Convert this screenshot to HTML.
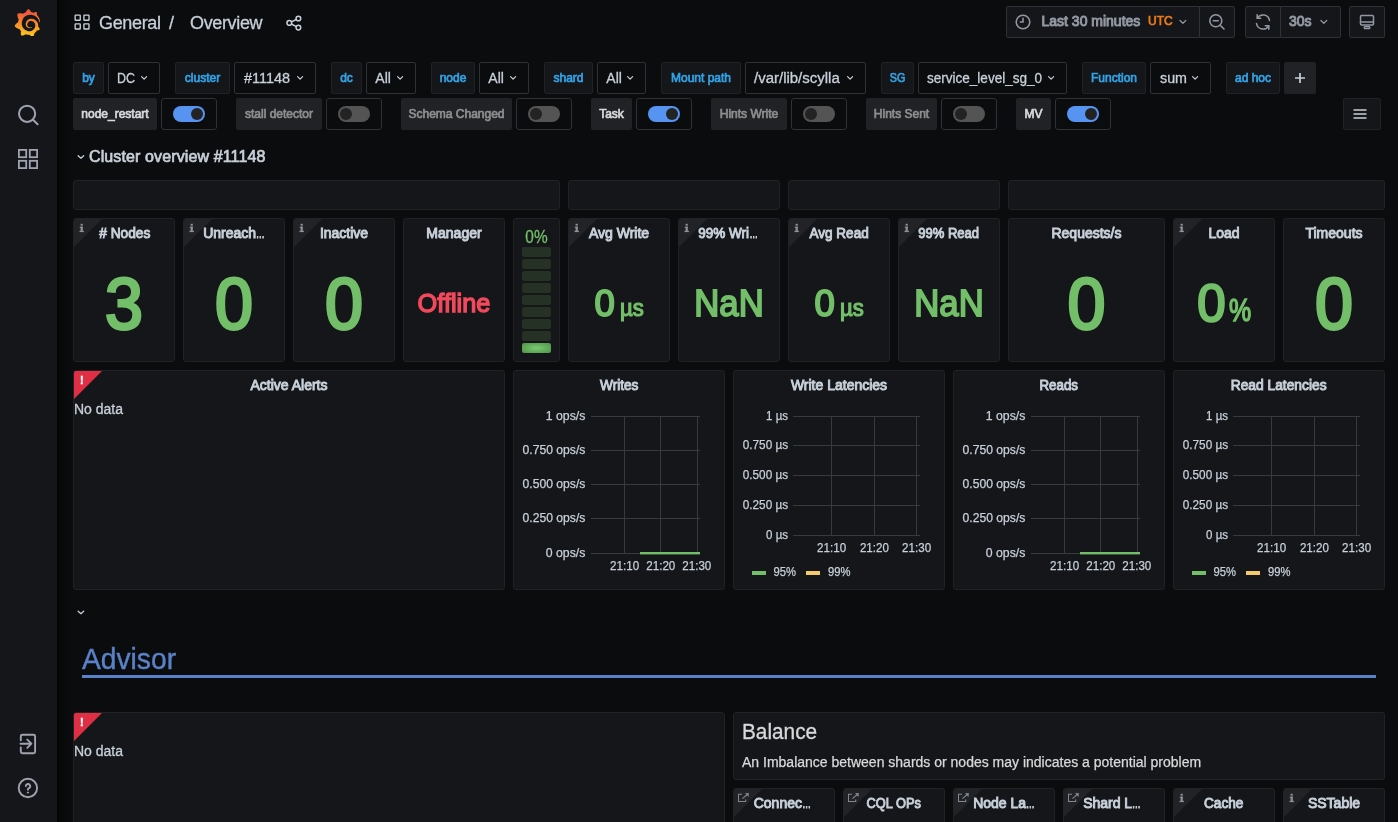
<!DOCTYPE html><html><head><meta charset="utf-8"><title>Overview - Grafana</title><style>
*{box-sizing:border-box;margin:0;padding:0}
html,body{width:1398px;height:822px;overflow:hidden;background:#0b0c0e;}
body{font-family:"Liberation Sans",sans-serif;color:#c7d0d9;position:relative;font-size:14px}
.abs{position:absolute}
.g text{stroke:#c7d0d9;stroke-width:0.25px}
.m{font-weight:normal;-webkit-text-stroke:0.95px}
#side{left:0;top:0;width:57px;height:822px;background:#141619;}
.panel{position:absolute;background:#141619;border:1px solid #202226;border-radius:3px;overflow:hidden}
.ptitle{position:absolute;left:0;right:0;top:6px;text-align:center;font-weight:normal;-webkit-text-stroke:0.95px;font-size:14px;color:#c7d0d9;white-space:nowrap;line-height:16px}
.val{position:absolute;left:0;right:0;text-align:center;font-weight:bold;white-space:nowrap}
.corner{position:absolute;left:0;top:0;width:0;height:0;border-top:28px solid #212327;border-right:28px solid transparent}
.corner.red{border-top-color:#e02f44}
.ci{position:absolute;left:6px;top:3px;font-size:10px;font-weight:bold;color:#8e8e8e;font-family:"Liberation Serif",serif;line-height:12px}
.vlabel{position:absolute;height:32px;background:#141619;border:1px solid #202226;border-radius:2px;color:#33a2e5;font-size:12px;font-weight:normal;-webkit-text-stroke:0.7px;line-height:30px;text-align:center;white-space:nowrap}
.vval{position:absolute;height:32px;background:#0b0c0e;border:1px solid #2c3235;border-radius:2px;color:#c7d0d9;font-size:14px;-webkit-text-stroke:0.3px;line-height:30px;padding-left:8px;white-space:nowrap}
.alabel{position:absolute;height:32px;background:#202226;border-radius:2px;font-size:12px;font-weight:normal;-webkit-text-stroke:0.7px;line-height:32px;text-align:center;white-space:nowrap}
.tbox{position:absolute;height:32px;width:56px;background:#0b0c0e;border:1px solid #2c3235;border-radius:3px}
.tog{position:absolute;left:11px;top:7px;width:32px;height:16px;border-radius:8px;background:#545454}
.tog i{position:absolute;top:2px;left:2px;width:12px;height:12px;border-radius:6px;background:#232324}
.tog.on{background:#5794f2}
.tog.on i{left:18px}
.tbtn{position:absolute;top:6px;height:32px;background:#141619;border:1px solid #2c3235;color:#9fa7b3;font-size:14px;line-height:30px;white-space:nowrap}
</style></head><body><div id="root" style="position:absolute;left:0;top:0;width:1398px;height:822px;will-change:transform">
<div id="side" class="abs"></div>
<div class="abs" style="left:57px;top:0;width:16px;height:822px;background:linear-gradient(90deg,#020202,#070809 20%,#0b0c0e)"></div>
<svg class="abs" style="left:14.05px;top:8.5px" width="26.68" height="27.74" viewBox="0 0 351 365"><defs><linearGradient id="lg" gradientUnits="userSpaceOnUse" x1="175" y1="365" x2="175" y2="50"><stop offset="0" stop-color="#fccb1a"/><stop offset="1" stop-color="#f2583a"/></linearGradient></defs><path fill="url(#lg)" d="M342,161.2c-0.6-6.1-1.6-13.100-3.600-20.900c-2-7.700-5-16.200-9.400-25c-4.400-8.800-10.100-17.900-17.500-26.800c-2.900-3.500-6.100-6.900-9.500-10.200c5.100-20.300-6.200-37.900-6.200-37.900c-19.500-1.200-31.900,6.100-36.500,9.400c-0.800-0.300-1.500-0.700-2.300-1c-3.300-1.300-6.700-2.600-10.300-3.700c-3.500-1.100-7.100-2.100-10.800-3c-3.700-0.900-7.400-1.600-11.200-2.200c-0.700-0.100-1.300-0.200-2-0.300c-8.500-27.200-32.900-38.600-32.900-38.600c-27.300,17.300-32.400,41.500-32.400,41.500s-0.100,0.500-0.300,1.400c-1.500,0.400-3,0.900-4.500,1.300c-2.100,0.600-4.200,1.400-6.200,2.200c-2.100,0.800-4.100,1.600-6.200,2.500c-4.100,1.800-8.200,3.800-12.200,6c-3.900,2.200-7.700,4.600-11.400,7.100c-0.500-0.200-1-0.400-1-0.400c-37.800-14.400-71.300,2.900-71.300,2.900c-3.100,40.200,15.100,65.500,18.700,70.100c-0.900,2.500-1.700,5-2.500,7.500c-2.800,9.100-4.900,18.400-6.200,28.100c-0.200,1.400-0.400,2.800-0.500,4.200C18.800,192.700,8.500,228,8.500,228c29.100,33.500,63.100,35.600,63.100,35.600c0,0,0.100-0.100,0.100-0.100c4.300,7.700,9.300,15,14.900,21.900c2.400,2.900,4.800,5.600,7.400,8.300c-10.600,30.400,1.500,55.600,1.500,55.600c32.400,1.200,53.700-14.200,58.200-17.700c3.200,1.100,6.500,2.100,9.800,2.900c10,2.600,20.200,4.100,30.400,4.500c2.500,0.100,5.100,0.200,7.600,0.100l1.200,0l0.800,0l1.600,0l1.600-0.100l0,0.100c15.300,21.800,42.100,24.900,42.100,24.900c19.100-20.100,20.200-40.100,20.200-44.400l0,0c0,0,0-0.100,0-0.300c0-0.400,0-0.600,0-0.600l0,0c0-0.300,0-0.600,0-0.900c4-2.800,7.800-5.800,11.400-9.100c7.600-6.900,14.300-14.800,19.900-23.300c0.500-0.800,1-1.600,1.500-2.400c21.600,1.200,36.900-13.400,36.900-13.400c-3.600-22.500-16.400-33.500-19.100-35.600l0,0c0,0-0.100-0.100-0.300-0.200c-0.200-0.100-0.200-0.200-0.200-0.200c0,0,0,0,0,0c-0.100-0.100-0.300-0.200-0.500-0.300c0.100-1.400,0.200-2.700,0.300-4.100c0.200-2.400,0.200-4.900,0.200-7.300l0-1.800l0-0.900l0-0.500c0-0.600,0-0.400,0-0.600l-0.100-1.500l-0.100-2c0-0.700-0.100-1.300-0.200-1.900c-0.100-0.600-0.100-1.300-0.200-1.900l-0.200-1.900l-0.300-1.900c-0.400-2.500-0.800-4.900-1.400-7.400c-2.300-9.700-6.100-18.900-11-27.200c-5-8.300-11.200-15.600-18.300-21.800c-7-6.200-14.900-11.200-23.100-14.900c-8.300-3.700-16.900-6.100-25.500-7.200c-4.300-0.600-8.600-0.800-12.900-0.700l-1.600,0l-0.400,0c-0.100,0-0.600,0-0.500,0l-0.700,0l-1.600,0.100c-0.600,0-1.200,0.100-1.700,0.100c-2.200,0.200-4.400,0.500-6.500,0.900c-8.600,1.600-16.700,4.700-23.800,9c-7.100,4.300-13.300,9.600-18.300,15.600c-5,6-8.900,12.700-11.600,19.600c-2.700,6.900-4.200,14.100-4.600,21c-0.100,1.700-0.100,3.500-0.100,5.200c0,0.400,0,0.900,0,1.300l0.100,1.400c0.100,0.800,0.100,1.700,0.200,2.500c0.300,3.500,1,6.900,1.900,10.100c1.900,6.500,4.900,12.400,8.600,17.400c3.700,5,8.200,9.100,12.900,12.400c4.700,3.200,9.800,5.500,14.800,7c5,1.500,10,2.100,14.700,2.100c0.600,0,1.200,0,1.700,0c0.300,0,0.600,0,0.900,0c0.300,0,0.600,0,0.900-0.100c0.500,0,1-0.100,1.500-0.100c0.100,0,0.300,0,0.400-0.100l0.500-0.100c0.300,0,0.600-0.100,0.900-0.100c0.600-0.100,1.100-0.200,1.700-0.300c0.600-0.100,1.100-0.200,1.600-0.400c1.100-0.200,2.100-0.600,3.100-0.900c2-0.700,4-1.500,5.700-2.400c1.800-0.900,3.400-2,5-3c0.400-0.300,0.900-0.600,1.300-1c1.600-1.300,1.900-3.700,0.600-5.300c-1.100-1.400-3.100-1.800-4.700-0.900c-0.400,0.200-0.800,0.400-1.200,0.600c-1.400,0.700-2.800,1.300-4.300,1.800c-1.500,0.500-3.100,0.900-4.700,1.200c-0.800,0.100-1.600,0.200-2.500,0.300c-0.400,0-0.800,0.100-1.300,0.100c-0.400,0-0.900,0-1.200,0c-0.400,0-0.800,0-1.200,0c-0.500,0-1,0-1.500-0.100c0,0-0.300,0-0.100,0l-0.200,0l-0.300,0c-0.200,0-0.500,0-0.700-0.100c-0.500-0.100-0.900-0.100-1.400-0.200c-3.700-0.500-7.400-1.600-10.900-3.200c-3.600-1.600-7-3.800-10.100-6.600c-3.100-2.800-5.800-6.100-7.900-9.900c-2.100-3.800-3.600-8-4.300-12.400c-0.300-2.200-0.500-4.500-0.400-6.700c0-0.600,0.100-1.200,0.100-1.800c0,0.200,0-0.100,0-0.100l0-0.200l0-0.500c0-0.300,0.100-0.600,0.100-0.900c0.100-1.200,0.300-2.400,0.500-3.600c1.700-9.600,6.500-19,13.900-26.100c1.900-1.800,3.900-3.400,6-4.900c2.100-1.500,4.400-2.800,6.800-3.900c2.400-1.100,4.800-2,7.400-2.700c2.500-0.700,5.100-1.100,7.800-1.400c1.300-0.100,2.600-0.200,4-0.200c0.400,0,0.600,0,0.900,0l1.100,0l0.700,0c0.300,0,0,0,0.100,0l0.300,0l1.100,0.100c2.900,0.200,5.700,0.600,8.500,1.300c5.600,1.200,11.100,3.300,16.200,6.100c10.200,5.700,18.900,14.500,24.200,25.100c2.700,5.300,4.600,11,5.500,16.900c0.200,1.500,0.400,3,0.500,4.500l0.100,1.100l0.100,1.100c0,0.400,0,0.800,0,1.100c0,0.400,0,0.800,0,1.100l0,1l0,1.100c0,0.700-0.100,1.900-0.100,2.600c-0.100,1.600-0.300,3.300-0.500,4.900c-0.200,1.600-0.500,3.200-0.800,4.800c-0.300,1.600-0.700,3.200-1.100,4.700c-0.800,3.100-1.800,6.200-3,9.300c-2.400,6-5.600,11.800-9.400,17.100c-7.700,10.600-18.200,19.200-30.200,24.700c-6,2.700-12.300,4.700-18.800,5.700c-3.200,0.600-6.500,0.900-9.800,1l-0.600,0l-0.500,0l-1.100,0l-1.600,0l-0.800,0c0.400,0-0.100,0-0.100,0l-0.300,0c-1.800,0-3.500-0.100-5.300-0.300c-7-0.500-13.900-1.800-20.700-3.700c-6.700-1.900-13.200-4.600-19.400-7.800c-12.300-6.600-23.400-15.600-32-26.500c-4.300-5.400-8.100-11.300-11.200-17.400c-3.100-6.100-5.600-12.600-7.400-19.100c-1.800-6.600-2.900-13.300-3.400-20.100l-0.100-1.300l0-0.300l0-0.300l0-0.600l0-1.100l0-0.300l0-0.400l0-0.800l0-1.600l0-0.300c0,0,0,0.100,0-0.100l0-0.600c0-0.800,0-1.700,0-2.500c0.100-3.300,0.400-6.800,0.800-10.200c0.400-3.400,1-6.900,1.700-10.300c0.700-3.400,1.500-6.800,2.500-10.200c1.900-6.700,4.300-13.200,7.100-19.300c5.700-12.200,13.100-23.100,22-31.800c2.200-2.200,4.500-4.200,6.900-6.200c2.400-1.900,4.900-3.700,7.500-5.400c2.500-1.700,5.200-3.200,7.900-4.600c1.300-0.700,2.700-1.400,4.100-2c0.700-0.300,1.400-0.600,2.100-0.900c0.700-0.300,1.400-0.600,2.100-0.900c2.800-1.200,5.700-2.200,8.700-3.100c0.700-0.200,1.500-0.400,2.200-0.700c0.700-0.200,1.500-0.400,2.200-0.600c1.500-0.400,3-0.800,4.500-1.100c0.700-0.200,1.500-0.300,2.300-0.500c0.800-0.200,1.500-0.300,2.300-0.500c0.800-0.100,1.500-0.300,2.300-0.400l1.100-0.200l1.200-0.200c0.800-0.100,1.500-0.200,2.300-0.300c0.900-0.100,1.700-0.200,2.600-0.300c0.700-0.100,1.900-0.200,2.600-0.300c0.500-0.100,1.100-0.100,1.600-0.200l1.100-0.100l0.500-0.100l0.600,0c0.900-0.100,1.700-0.100,2.600-0.200l1.300-0.100c0,0,0.500,0,0.100,0l0.300,0l0.600,0c0.700,0,1.500-0.100,2.200-0.100c2.900-0.100,5.900-0.100,8.800,0c5.800,0.200,11.500,0.900,17,1.900c11.100,2.100,21.500,5.600,31,10.300c9.500,4.600,17.900,10.300,25.300,16.500c0.500,0.400,0.900,0.800,1.400,1.200c0.400,0.400,0.900,0.800,1.300,1.200c0.900,0.800,1.700,1.600,2.600,2.400c0.900,0.800,1.700,1.600,2.500,2.400c0.800,0.800,1.600,1.600,2.400,2.500c3.100,3.300,6,6.600,8.600,10c5.200,6.700,9.400,13.500,12.700,19.900c0.200,0.400,0.400,0.800,0.600,1.200c0.200,0.400,0.400,0.800,0.600,1.200c0.400,0.800,0.800,1.600,1.100,2.400c0.400,0.800,0.700,1.500,1.100,2.300c0.300,0.800,0.700,1.500,1,2.300c1.200,3,2.400,5.900,3.300,8.600c1.500,4.400,2.600,8.300,3.500,11.700c0.300,1.400,1.600,2.300,3,2.100c1.500-0.100,2.600-1.300,2.600-2.800C342.600,170.400,342.500,166.100,342,161.200z"/></svg>
<svg class="abs" style="left:16px;top:102px" width="26" height="26" viewBox="0 0 26 26" fill="none" stroke="#9fa3b0" stroke-width="2" stroke-linecap="round"><circle cx="11.1" cy="11.8" r="8.1"/><path d="M17 17.7 L21.6 22.3"/></svg>
<svg class="abs" style="left:17px;top:148px" width="22" height="22" viewBox="0 0 22 22" fill="none" stroke="#9fa3b0" stroke-width="1.8"><rect x="1.9" y="1.9" width="7.3" height="7.3"/><rect x="12.8" y="1.9" width="7.3" height="7.3"/><rect x="1.9" y="12.8" width="7.3" height="7.3"/><rect x="12.8" y="12.8" width="7.3" height="7.3"/></svg>
<svg class="abs" style="left:16px;top:731px" width="24" height="26" viewBox="0 0 24 26" fill="none" stroke="#9fa3b0" stroke-width="1.9" stroke-linecap="round" stroke-linejoin="round"><path d="M4.800 9.200 V5.300 a1.500 1.500 0 0 1 1.500 -1.500 H17.600 a1.500 1.500 0 0 1 1.500 1.500 V20.700 a1.500 1.500 0 0 1 -1.500 1.500 H6.300 a1.500 1.500 0 0 1 -1.500 -1.500 V16.500"/><path d="M4.500 12.700 H15 M11.300 8.600 L15.400 12.700 L11.300 16.800"/></svg>
<svg class="abs" style="left:16px;top:776px" width="24" height="24" viewBox="0 0 24 24" fill="none" stroke="#9fa3b0" stroke-width="1.9" stroke-linecap="round"><circle cx="11.900" cy="12" r="9.200"/><path d="M9.800 10.100 a2.200 2.200 0 1 1 3.200 2 c-0.700 0.400 -1.100 0.800 -1.100 1.600" stroke-width="1.900"/><circle cx="11.900" cy="16.600" r="0.700" fill="#9fa3b0" stroke-width="0.8"/></svg>
<svg class="abs" style="left:73.8px;top:13.700px" width="17" height="17" viewBox="0 0 17 17" fill="none" stroke="#c7d0d9" stroke-width="1.35"><rect x="1.150" y="1.150" width="5.100" height="5.100" rx="0.500"/><rect x="9.900" y="1.150" width="5.100" height="5.100" rx="0.500"/><rect x="1.150" y="9.900" width="5.100" height="5.100" rx="0.500"/><rect x="9.900" y="9.900" width="5.100" height="5.100" rx="0.500"/></svg>
<div class="abs" id="crumb1" style="left:99px;top:12px;font-size:18px;letter-spacing:-0.35px;-webkit-text-stroke:0.3px;line-height:22px;color:#c7d0d9;white-space:nowrap">General</div>
<div class="abs" id="crumb2" style="left:169px;top:12px;font-size:18px;letter-spacing:-0.35px;-webkit-text-stroke:0.3px;line-height:22px;color:#c7d0d9;white-space:nowrap">/</div>
<div class="abs" id="crumb3" style="left:190px;top:12px;font-size:18px;letter-spacing:-0.35px;-webkit-text-stroke:0.3px;line-height:22px;color:#c7d0d9;white-space:nowrap">Overview</div>
<svg class="abs" style="left:285px;top:14px" width="18" height="18" viewBox="0 0 18 18" fill="none" stroke="#c7d0d9" stroke-width="1.5"><circle cx="13.400" cy="4.500" r="2.350"/><circle cx="4.300" cy="8.950" r="2.350"/><circle cx="13.400" cy="13.600" r="2.350"/><path d="M6.400 7.900 L11.300 5.500 M6.400 10 L11.300 12.550"/></svg>
<div class="tbtn" style="left:1006px;width:194px;border-radius:2px 0 0 2px"></div>
<div class="tbtn" style="left:1199px;width:36px;border-radius:0 2px 2px 0"></div>
<div class="tbtn" style="left:1245px;width:36px;border-radius:2px 0 0 2px"></div>
<div class="tbtn" style="left:1280px;width:61px;border-radius:0 2px 2px 0"></div>
<div class="tbtn" style="left:1349px;width:36px;border-radius:2px"></div>
<svg class="abs" style="left:1015px;top:14px" width="16" height="16" viewBox="0 0 16 16" fill="none" stroke="#9298a2" stroke-width="1.55" stroke-linecap="round"><circle cx="8" cy="8" r="6.800"/><path d="M8 4.300 V8 H5.300"/></svg>
<div class="abs" id="tp" style="left:1041.5px;top:12px;font-size:14px;-webkit-text-stroke:0.95px;line-height:18px;color:#9298a2;white-space:nowrap">Last 30 minutes</div>
<div class="abs" id="utc" style="left:1148px;top:13px;font-size:12px;-webkit-text-stroke:0.7px;line-height:16px;color:#eb7b18;white-space:nowrap">UTC</div>
<svg class="abs" style="left:1178px;top:18px" width="11" height="8" fill="none" stroke="#9298a2" stroke-width="1.2" stroke-linecap="round" stroke-linejoin="round"><path d="M2.00 2.50 L4.90 5.30 L7.80 2.50"/></svg>
<svg class="abs" style="left:1208px;top:13px" width="18" height="18" viewBox="0 0 18 18" fill="none" stroke="#9298a2" stroke-width="1.55" stroke-linecap="round"><circle cx="7.800" cy="7.800" r="6"/><path d="M12.200 12.200 L16 16 M5.300 7.800 H10.300"/></svg>
<svg class="abs" style="left:1254px;top:13px" width="18" height="18" viewBox="0 0 18 18" fill="none" stroke="#9298a2" stroke-width="1.55" stroke-linecap="round" stroke-linejoin="round"><path d="M15.500 7.500 A6.600 6.600 0 0 0 3.300 5.200 M2.500 10.500 A6.600 6.600 0 0 0 14.700 12.800"/><path d="M3.200 1.800 V5.300 H6.700 M14.800 16.200 V12.700 H11.300"/></svg>
<div class="abs" id="r30" style="left:1289px;top:12px;font-size:14px;-webkit-text-stroke:0.95px;line-height:18px;color:#9298a2;white-space:nowrap">30s</div>
<svg class="abs" style="left:1319px;top:18px" width="11" height="8" fill="none" stroke="#9298a2" stroke-width="1.2" stroke-linecap="round" stroke-linejoin="round"><path d="M1.90 2.50 L4.80 5.30 L7.70 2.50"/></svg>
<svg class="abs" style="left:1358px;top:13px" width="18" height="18" viewBox="0 0 18 18" fill="none" stroke="#9298a2" stroke-width="1.5" stroke-linecap="round" stroke-linejoin="round"><rect x="2.500" y="2.600" width="13" height="9.400" rx="1.2"/><path d="M2.500 9 H15.500"/><rect x="6.200" y="13.700" width="5.600" height="1.800" rx="0.6" stroke-width="1.3"/></svg>
<div class="vlabel" style="left:73px;top:62px;width:31px">by</div>
<div class="vval" id="vv0" style="left:108px;top:62px;width:52px"><span style="display:inline-block;transform-origin:0 50%;transform:scaleX(0.89);margin-left:0px">DC</span></div>
<svg class="abs" style="left:140px;top:75px" width="10" height="7" fill="none" stroke="#c7d0d9" stroke-width="1.2" stroke-linecap="round" stroke-linejoin="round"><path d="M1.60 1.60 L4.10 4.20 L6.60 1.60"/></svg>
<div class="vlabel" style="left:175px;top:62px;width:55px">cluster</div>
<div class="vval" id="vv1" style="left:234px;top:62px;width:82px"><span style="display:inline-block;transform-origin:0 50%;transform:scaleX(1.03);margin-left:0.8px">#11148</span></div>
<svg class="abs" style="left:296px;top:75px" width="10" height="7" fill="none" stroke="#c7d0d9" stroke-width="1.2" stroke-linecap="round" stroke-linejoin="round"><path d="M1.60 1.60 L4.10 4.20 L6.60 1.60"/></svg>
<div class="vlabel" style="left:331px;top:62px;width:31px">dc</div>
<div class="vval" id="vv2" style="left:366px;top:62px;width:50px"><span style="display:inline-block;transform-origin:0 50%;transform:scaleX(1.0);margin-left:0.3px">All</span></div>
<svg class="abs" style="left:396px;top:75px" width="10" height="7" fill="none" stroke="#c7d0d9" stroke-width="1.2" stroke-linecap="round" stroke-linejoin="round"><path d="M1.60 1.60 L4.10 4.20 L6.60 1.60"/></svg>
<div class="vlabel" style="left:431px;top:62px;width:44px">node</div>
<div class="vval" id="vv3" style="left:479px;top:62px;width:50px"><span style="display:inline-block;transform-origin:0 50%;transform:scaleX(1.0);margin-left:0.3px">All</span></div>
<svg class="abs" style="left:509px;top:75px" width="10" height="7" fill="none" stroke="#c7d0d9" stroke-width="1.2" stroke-linecap="round" stroke-linejoin="round"><path d="M1.60 1.60 L4.10 4.20 L6.60 1.60"/></svg>
<div class="vlabel" style="left:544px;top:62px;width:49px">shard</div>
<div class="vval" id="vv4" style="left:597px;top:62px;width:49px"><span style="display:inline-block;transform-origin:0 50%;transform:scaleX(1.0);margin-left:0.3px">All</span></div>
<svg class="abs" style="left:626px;top:75px" width="10" height="7" fill="none" stroke="#c7d0d9" stroke-width="1.2" stroke-linecap="round" stroke-linejoin="round"><path d="M1.60 1.60 L4.10 4.20 L6.60 1.60"/></svg>
<div class="vlabel" style="left:661px;top:62px;width:80px">Mount path</div>
<div class="vval" id="vv5" style="left:745px;top:62px;width:121px"><span style="display:inline-block;transform-origin:0 50%;transform:scaleX(1.07);margin-left:-0.5px">/var/lib/scylla</span></div>
<svg class="abs" style="left:846px;top:75px" width="10" height="7" fill="none" stroke="#c7d0d9" stroke-width="1.2" stroke-linecap="round" stroke-linejoin="round"><path d="M1.60 1.60 L4.10 4.20 L6.60 1.60"/></svg>
<div class="vlabel" style="left:881px;top:62px;width:33px"><span style="display:inline-block;transform:scaleX(.9)">SG</span></div>
<div class="vval" id="vv6" style="left:918px;top:62px;width:149px"><span style="display:inline-block;transform-origin:0 50%;transform:scaleX(0.966);margin-left:0.2px">service_level_sg_0</span></div>
<svg class="abs" style="left:1047px;top:75px" width="10" height="7" fill="none" stroke="#c7d0d9" stroke-width="1.2" stroke-linecap="round" stroke-linejoin="round"><path d="M1.60 1.60 L4.10 4.20 L6.60 1.60"/></svg>
<div class="vlabel" style="left:1082px;top:62px;width:64px">Function</div>
<div class="vval" id="vv7" style="left:1150px;top:62px;width:61px"><span style="display:inline-block;transform-origin:0 50%;transform:scaleX(1.02);margin-left:0.7px">sum</span></div>
<svg class="abs" style="left:1191px;top:75px" width="10" height="7" fill="none" stroke="#c7d0d9" stroke-width="1.2" stroke-linecap="round" stroke-linejoin="round"><path d="M1.60 1.60 L4.10 4.20 L6.60 1.60"/></svg>
<div class="vlabel" style="left:1226px;top:62px;width:54px">ad hoc</div>
<div class="abs" style="left:1284px;top:62px;width:32px;height:32px;background:#202226;border-radius:2px"></div>
<svg class="abs" style="left:1293px;top:71px" width="14" height="14" viewBox="0 0 14 14" stroke="#c7d0d9" stroke-width="1.7"><path d="M7 2 V12 M2 7 H12"/></svg>
<div class="alabel" style="left:73px;top:98px;width:84px;color:#d8d9da">node_restart</div>
<div class="tbox" style="left:161px;top:98px"><div class="tog on"><i></i></div></div>
<div class="alabel" style="left:236px;top:98px;width:86px;color:#8e8e8e">stall detector</div>
<div class="tbox" style="left:326px;top:98px"><div class="tog"><i></i></div></div>
<div class="alabel" style="left:401px;top:98px;width:111px;color:#8e8e8e">Schema Changed</div>
<div class="tbox" style="left:516px;top:98px"><div class="tog"><i></i></div></div>
<div class="alabel" style="left:591px;top:98px;width:41px;color:#d8d9da">Task</div>
<div class="tbox" style="left:636px;top:98px"><div class="tog on"><i></i></div></div>
<div class="alabel" style="left:711px;top:98px;width:76px;color:#8e8e8e">Hints Write</div>
<div class="tbox" style="left:791px;top:98px"><div class="tog"><i></i></div></div>
<div class="alabel" style="left:866px;top:98px;width:71px;color:#8e8e8e">Hints Sent</div>
<div class="tbox" style="left:941px;top:98px"><div class="tog"><i></i></div></div>
<div class="alabel" style="left:1016px;top:98px;width:35px;color:#d8d9da">MV</div>
<div class="tbox" style="left:1055px;top:98px"><div class="tog on"><i></i></div></div>
<div class="abs" style="left:1343px;top:98px;width:38px;height:32px;background:#141619;border:1px solid #202226;border-radius:2px"></div>
<svg class="abs" style="left:1353px;top:108px" width="14" height="12" viewBox="0 0 14 12" stroke="#c7d0d9" stroke-width="1.500"><path d="M0.500 2 H13.500 M0.500 6 H13.500 M0.500 10 H13.500"/></svg>
<svg class="abs" style="left:76px;top:154px" width="10" height="7" fill="none" stroke="#c7d0d9" stroke-width="1.3" stroke-linecap="round" stroke-linejoin="round"><path d="M2.15 1.65 L4.90 4.15 L7.65 1.65"/></svg>
<div class="abs" id="rowt" style="left:89px;top:147px;font-size:16px;-webkit-text-stroke:0.7px;letter-spacing:0.12px;line-height:20px;color:#c7d0d9;white-space:nowrap">Cluster overview #11148</div>
<div class="panel" style="left:73px;top:180px;width:487px;height:30px;"></div>
<div class="panel" style="left:568px;top:180px;width:212px;height:30px;"></div>
<div class="panel" style="left:788px;top:180px;width:212px;height:30px;"></div>
<div class="panel" style="left:1008px;top:180px;width:377px;height:30px;"></div>
<div class="panel" style="left:73px;top:218px;width:102px;height:144px;"><div class="corner"></div><svg class="abs" style="left:5px;top:4px" width="6" height="10" viewBox="0 0 6 10" fill="#8e9196"><rect x="1.6" y="0.8" width="2.2" height="1.8"/><rect x="0.8" y="3.7" width="3" height="1.2"/><rect x="1.6" y="3.700" width="2.2" height="4.6"/><rect x="0.5" y="7.800" width="4.4" height="1.3"/></svg><div class="ptitle"><span style="display:inline-block;transform:translateX(0.7px) scaleX(0.98)"># Nodes</span></div><div class="val" style="top:47.5px;left:0px;right:0px;font-weight:normal;-webkit-text-stroke:3px;font-size:73px;line-height:73px;color:#73bf69;transform:scaleX(0.935);">3</div></div>
<div class="panel" style="left:183px;top:218px;width:102px;height:144px;"><div class="corner"></div><svg class="abs" style="left:5px;top:4px" width="6" height="10" viewBox="0 0 6 10" fill="#8e9196"><rect x="1.6" y="0.8" width="2.2" height="1.8"/><rect x="0.8" y="3.7" width="3" height="1.2"/><rect x="1.6" y="3.700" width="2.2" height="4.6"/><rect x="0.5" y="7.800" width="4.4" height="1.3"/></svg><div class="ptitle">Unreach<span style="display:inline-block;transform:scaleX(.62);transform-origin:0 50%;margin-right:-5.3px">…</span></div><div class="val" style="top:47.5px;left:0px;right:0px;font-weight:normal;-webkit-text-stroke:3px;font-size:73px;line-height:73px;color:#73bf69;transform:scaleX(0.935);">0</div></div>
<div class="panel" style="left:293px;top:218px;width:102px;height:144px;"><div class="corner"></div><svg class="abs" style="left:5px;top:4px" width="6" height="10" viewBox="0 0 6 10" fill="#8e9196"><rect x="1.6" y="0.8" width="2.2" height="1.8"/><rect x="0.8" y="3.7" width="3" height="1.2"/><rect x="1.6" y="3.700" width="2.2" height="4.6"/><rect x="0.5" y="7.800" width="4.4" height="1.3"/></svg><div class="ptitle">Inactive</div><div class="val" style="top:47.5px;left:0px;right:0px;font-weight:normal;-webkit-text-stroke:3px;font-size:73px;line-height:73px;color:#73bf69;transform:scaleX(0.935);">0</div></div>
<div class="panel" style="left:403px;top:218px;width:102px;height:144px;"><div class="ptitle">Manager</div><div class="val" style="top:71px;left:0px;right:0px;font-weight:normal;-webkit-text-stroke:1.4px;font-size:26px;line-height:26px;color:#f2495c;transform:scaleX(0.975);">Offline</div></div>
<div class="panel" style="left:513px;top:218px;width:47px;height:144px;"><div class="abs" style="left:0;right:0;top:9px;text-align:center;font-size:17.5px;line-height:18px;color:#73bf69;-webkit-text-stroke:0.3px;transform:scaleX(.88)">0%</div><div class="abs" style="left:8px;top:28px;width:29px;height:10px;border-radius:2px;background:#263126"></div><div class="abs" style="left:8px;top:40px;width:29px;height:10px;border-radius:2px;background:#263126"></div><div class="abs" style="left:8px;top:52px;width:29px;height:10px;border-radius:2px;background:#263126"></div><div class="abs" style="left:8px;top:64px;width:29px;height:10px;border-radius:2px;background:#263126"></div><div class="abs" style="left:8px;top:76px;width:29px;height:10px;border-radius:2px;background:#263126"></div><div class="abs" style="left:8px;top:88px;width:29px;height:10px;border-radius:2px;background:#263126"></div><div class="abs" style="left:8px;top:100px;width:29px;height:10px;border-radius:2px;background:#263126"></div><div class="abs" style="left:8px;top:112px;width:29px;height:10px;border-radius:2px;background:#263126"></div><div class="abs" style="left:8px;top:124px;width:29px;height:10px;border-radius:2px;background:radial-gradient(ellipse at center,#7ccb70 0%,#62ab5a 55%,#4f9049 100%)"></div></div>
<div class="panel" style="left:568px;top:218px;width:102px;height:144px;"><div class="corner"></div><svg class="abs" style="left:5px;top:4px" width="6" height="10" viewBox="0 0 6 10" fill="#8e9196"><rect x="1.6" y="0.8" width="2.2" height="1.8"/><rect x="0.8" y="3.7" width="3" height="1.2"/><rect x="1.6" y="3.700" width="2.2" height="4.6"/><rect x="0.5" y="7.800" width="4.4" height="1.3"/></svg><div class="ptitle">Avg Write</div><div class="val" style="top:67px;left:0px;right:0px;font-weight:normal;-webkit-text-stroke:1.8px;font-size:36.5px;line-height:36.5px;color:#73bf69;">0<span style="display:inline-block;font-size:23px;margin-left:5px;margin-right:-1px;transform:scaleX(0.96);transform-origin:0 50%;-webkit-text-stroke:1.2px">µs</span></div></div>
<div class="panel" style="left:678px;top:218px;width:102px;height:144px;"><div class="corner"></div><svg class="abs" style="left:5px;top:4px" width="6" height="10" viewBox="0 0 6 10" fill="#8e9196"><rect x="1.6" y="0.8" width="2.2" height="1.8"/><rect x="0.8" y="3.7" width="3" height="1.2"/><rect x="1.6" y="3.700" width="2.2" height="4.6"/><rect x="0.5" y="7.800" width="4.4" height="1.3"/></svg><div class="ptitle"><span style="display:inline-block;transform:translateX(-0.8px) scaleX(0.965)">99% Wri<span style="display:inline-block;transform:scaleX(.62);transform-origin:0 50%;margin-right:-5.3px">…</span></span></div><div class="val" style="top:67px;left:0px;right:0px;font-weight:normal;-webkit-text-stroke:1.8px;font-size:36.5px;line-height:36.5px;color:#73bf69;transform:scaleX(0.95);">NaN</div></div>
<div class="panel" style="left:788px;top:218px;width:102px;height:144px;"><div class="corner"></div><svg class="abs" style="left:5px;top:4px" width="6" height="10" viewBox="0 0 6 10" fill="#8e9196"><rect x="1.6" y="0.8" width="2.2" height="1.8"/><rect x="0.8" y="3.7" width="3" height="1.2"/><rect x="1.6" y="3.700" width="2.2" height="4.6"/><rect x="0.5" y="7.800" width="4.4" height="1.3"/></svg><div class="ptitle"><span style="display:inline-block;transform:translateX(0.5px) scaleX(0.965)">Avg Read</span></div><div class="val" style="top:67px;left:0px;right:0px;font-weight:normal;-webkit-text-stroke:1.8px;font-size:36.5px;line-height:36.5px;color:#73bf69;">0<span style="display:inline-block;font-size:23px;margin-left:5px;margin-right:-1px;transform:scaleX(0.96);transform-origin:0 50%;-webkit-text-stroke:1.2px">µs</span></div></div>
<div class="panel" style="left:898px;top:218px;width:102px;height:144px;"><div class="corner"></div><svg class="abs" style="left:5px;top:4px" width="6" height="10" viewBox="0 0 6 10" fill="#8e9196"><rect x="1.6" y="0.8" width="2.2" height="1.8"/><rect x="0.8" y="3.7" width="3" height="1.2"/><rect x="1.6" y="3.700" width="2.2" height="4.6"/><rect x="0.5" y="7.800" width="4.4" height="1.3"/></svg><div class="ptitle"><span style="display:inline-block;transform:translateX(0px) scaleX(0.93)">99% Read</span></div><div class="val" style="top:67px;left:0px;right:0px;font-weight:normal;-webkit-text-stroke:1.8px;font-size:36.5px;line-height:36.5px;color:#73bf69;transform:scaleX(0.95);">NaN</div></div>
<div class="panel" style="left:1008px;top:218px;width:157px;height:144px;"><div class="ptitle">Requests/s</div><div class="val" style="top:47.5px;left:0px;right:0px;font-weight:normal;-webkit-text-stroke:3px;font-size:73px;line-height:73px;color:#73bf69;transform:scaleX(0.935);">0</div></div>
<div class="panel" style="left:1173px;top:218px;width:102px;height:144px;"><div class="corner"></div><svg class="abs" style="left:5px;top:4px" width="6" height="10" viewBox="0 0 6 10" fill="#8e9196"><rect x="1.6" y="0.8" width="2.2" height="1.8"/><rect x="0.8" y="3.7" width="3" height="1.2"/><rect x="1.6" y="3.700" width="2.2" height="4.6"/><rect x="0.5" y="7.800" width="4.4" height="1.3"/></svg><div class="ptitle">Load</div><div class="val" style="top:59px;left:0px;right:0px;font-weight:normal;-webkit-text-stroke:2.3px;font-size:51px;line-height:51px;color:#73bf69;">0<span style="display:inline-block;font-size:32px;margin-left:3px;margin-right:-6.2px;transform:scaleX(0.78);transform-origin:0 50%;-webkit-text-stroke:1.5px">%</span></div></div>
<div class="panel" style="left:1283px;top:218px;width:102px;height:144px;"><div class="ptitle">Timeouts</div><div class="val" style="top:47.5px;left:0px;right:0px;font-weight:normal;-webkit-text-stroke:3px;font-size:73px;line-height:73px;color:#73bf69;transform:scaleX(0.935);">0</div></div>
<div class="panel" style="left:73px;top:370px;width:432px;height:220px;"><div class="corner red"></div><div class="abs" style="left:6px;top:3px;font-size:11px;font-weight:bold;-webkit-text-stroke:0.5px;color:#fff;line-height:12px">!</div><div class="ptitle">Active Alerts</div><div class="abs" style="left:0;top:29px;font-size:14px;-webkit-text-stroke:0.3px;line-height:18px;color:#c7d0d9">No data</div></div>
<div class="panel" style="left:513px;top:370px;width:212px;height:220px;"><div class="ptitle"><span style="display:inline-block;transform:translateX(0.5px) scaleX(0.975)">Writes</span></div><svg class="abs g" style="left:-1px;top:-1px" width="212" height="220" viewBox="0 0 212 220" font-family="Liberation Sans, sans-serif" font-size="12" fill="#c7d0d9"><rect x="78" y="46" width="109" height="1" fill="#383a3e"/><text x="72.4" y="50.4" text-anchor="end" textLength="39.6" lengthAdjust="spacingAndGlyphs">1 ops/s</text><rect x="78" y="80" width="109" height="1" fill="#383a3e"/><text x="72.4" y="84.4" text-anchor="end" textLength="62.8" lengthAdjust="spacingAndGlyphs">0.750 ops/s</text><rect x="78" y="114" width="109" height="1" fill="#383a3e"/><text x="72.4" y="118.4" text-anchor="end" textLength="62.8" lengthAdjust="spacingAndGlyphs">0.500 ops/s</text><rect x="78" y="148" width="109" height="1" fill="#383a3e"/><text x="72.4" y="152.4" text-anchor="end" textLength="62.8" lengthAdjust="spacingAndGlyphs">0.250 ops/s</text><rect x="78" y="183" width="109" height="1" fill="#383a3e"/><text x="72.4" y="187.4" text-anchor="end" textLength="39.6" lengthAdjust="spacingAndGlyphs">0 ops/s</text><rect x="111" y="46" width="1" height="138" fill="#383a3e"/><text x="111.6" y="200.4" text-anchor="middle" textLength="29" lengthAdjust="spacingAndGlyphs">21:10</text><rect x="147" y="46" width="1" height="138" fill="#383a3e"/><text x="147.8" y="200.4" text-anchor="middle" textLength="29" lengthAdjust="spacingAndGlyphs">21:20</text><rect x="184" y="46" width="1" height="138" fill="#383a3e"/><text x="183.8" y="200.4" text-anchor="middle" textLength="29" lengthAdjust="spacingAndGlyphs">21:30</text><rect x="127" y="182" width="60" height="2.4" fill="#73bf69"/></svg></div>
<div class="panel" style="left:953px;top:370px;width:212px;height:220px;"><div class="ptitle"><span style="display:inline-block;transform:translateX(-0.5px) scaleX(0.95)">Reads</span></div><svg class="abs g" style="left:-1px;top:-1px" width="212" height="220" viewBox="0 0 212 220" font-family="Liberation Sans, sans-serif" font-size="12" fill="#c7d0d9"><rect x="78" y="46" width="109" height="1" fill="#383a3e"/><text x="72.4" y="50.4" text-anchor="end" textLength="39.6" lengthAdjust="spacingAndGlyphs">1 ops/s</text><rect x="78" y="80" width="109" height="1" fill="#383a3e"/><text x="72.4" y="84.4" text-anchor="end" textLength="62.8" lengthAdjust="spacingAndGlyphs">0.750 ops/s</text><rect x="78" y="114" width="109" height="1" fill="#383a3e"/><text x="72.4" y="118.4" text-anchor="end" textLength="62.8" lengthAdjust="spacingAndGlyphs">0.500 ops/s</text><rect x="78" y="148" width="109" height="1" fill="#383a3e"/><text x="72.4" y="152.4" text-anchor="end" textLength="62.8" lengthAdjust="spacingAndGlyphs">0.250 ops/s</text><rect x="78" y="183" width="109" height="1" fill="#383a3e"/><text x="72.4" y="187.4" text-anchor="end" textLength="39.6" lengthAdjust="spacingAndGlyphs">0 ops/s</text><rect x="111" y="46" width="1" height="138" fill="#383a3e"/><text x="111.6" y="200.4" text-anchor="middle" textLength="29" lengthAdjust="spacingAndGlyphs">21:10</text><rect x="147" y="46" width="1" height="138" fill="#383a3e"/><text x="147.8" y="200.4" text-anchor="middle" textLength="29" lengthAdjust="spacingAndGlyphs">21:20</text><rect x="184" y="46" width="1" height="138" fill="#383a3e"/><text x="183.8" y="200.4" text-anchor="middle" textLength="29" lengthAdjust="spacingAndGlyphs">21:30</text><rect x="127" y="182" width="60" height="2.4" fill="#73bf69"/></svg></div>
<div class="panel" style="left:733px;top:370px;width:212px;height:220px;"><div class="ptitle">Write Latencies</div><svg class="abs g" style="left:-1px;top:-1px" width="212" height="220" viewBox="0 0 212 220" font-family="Liberation Sans, sans-serif" font-size="12" fill="#c7d0d9"><rect x="60" y="46" width="127" height="1" fill="#383a3e"/><text x="55.1" y="50.4" text-anchor="end" textLength="22" lengthAdjust="spacingAndGlyphs">1 µs</text><rect x="60" y="75" width="127" height="1" fill="#383a3e"/><text x="55.1" y="79.4" text-anchor="end" textLength="45.3" lengthAdjust="spacingAndGlyphs">0.750 µs</text><rect x="60" y="105" width="127" height="1" fill="#383a3e"/><text x="55.1" y="109.4" text-anchor="end" textLength="45.3" lengthAdjust="spacingAndGlyphs">0.500 µs</text><rect x="60" y="135" width="127" height="1" fill="#383a3e"/><text x="55.1" y="139.4" text-anchor="end" textLength="45.3" lengthAdjust="spacingAndGlyphs">0.250 µs</text><rect x="60" y="165" width="127" height="1" fill="#383a3e"/><text x="55.1" y="169.4" text-anchor="end" textLength="22" lengthAdjust="spacingAndGlyphs">0 µs</text><rect x="98" y="46" width="1" height="120" fill="#383a3e"/><text x="98.6" y="182.4" text-anchor="middle" textLength="29" lengthAdjust="spacingAndGlyphs">21:10</text><rect x="141" y="46" width="1" height="120" fill="#383a3e"/><text x="141.4" y="182.4" text-anchor="middle" textLength="29" lengthAdjust="spacingAndGlyphs">21:20</text><rect x="183" y="46" width="1" height="120" fill="#383a3e"/><text x="183.6" y="182.4" text-anchor="middle" textLength="29" lengthAdjust="spacingAndGlyphs">21:30</text><rect x="19" y="201" width="14" height="4" fill="#73bf69"/><text x="40.5" y="205.8" textLength="22.5" lengthAdjust="spacingAndGlyphs">95%</text><rect x="73" y="201" width="14" height="4" fill="#f2c96d"/><text x="95" y="205.8" textLength="22.5" lengthAdjust="spacingAndGlyphs">99%</text></svg></div>
<div class="panel" style="left:1173px;top:370px;width:212px;height:220px;"><div class="ptitle"><span style="display:inline-block;transform:translateX(0px) scaleX(0.985)">Read Latencies</span></div><svg class="abs g" style="left:-1px;top:-1px" width="212" height="220" viewBox="0 0 212 220" font-family="Liberation Sans, sans-serif" font-size="12" fill="#c7d0d9"><rect x="60" y="46" width="127" height="1" fill="#383a3e"/><text x="55.1" y="50.4" text-anchor="end" textLength="22" lengthAdjust="spacingAndGlyphs">1 µs</text><rect x="60" y="75" width="127" height="1" fill="#383a3e"/><text x="55.1" y="79.4" text-anchor="end" textLength="45.3" lengthAdjust="spacingAndGlyphs">0.750 µs</text><rect x="60" y="105" width="127" height="1" fill="#383a3e"/><text x="55.1" y="109.4" text-anchor="end" textLength="45.3" lengthAdjust="spacingAndGlyphs">0.500 µs</text><rect x="60" y="135" width="127" height="1" fill="#383a3e"/><text x="55.1" y="139.4" text-anchor="end" textLength="45.3" lengthAdjust="spacingAndGlyphs">0.250 µs</text><rect x="60" y="165" width="127" height="1" fill="#383a3e"/><text x="55.1" y="169.4" text-anchor="end" textLength="22" lengthAdjust="spacingAndGlyphs">0 µs</text><rect x="98" y="46" width="1" height="120" fill="#383a3e"/><text x="98.6" y="182.4" text-anchor="middle" textLength="29" lengthAdjust="spacingAndGlyphs">21:10</text><rect x="141" y="46" width="1" height="120" fill="#383a3e"/><text x="141.4" y="182.4" text-anchor="middle" textLength="29" lengthAdjust="spacingAndGlyphs">21:20</text><rect x="183" y="46" width="1" height="120" fill="#383a3e"/><text x="183.6" y="182.4" text-anchor="middle" textLength="29" lengthAdjust="spacingAndGlyphs">21:30</text><rect x="19" y="201" width="14" height="4" fill="#73bf69"/><text x="40.5" y="205.8" textLength="22.5" lengthAdjust="spacingAndGlyphs">95%</text><rect x="73" y="201" width="14" height="4" fill="#f2c96d"/><text x="95" y="205.8" textLength="22.5" lengthAdjust="spacingAndGlyphs">99%</text></svg></div>
<svg class="abs" style="left:76px;top:609px" width="10" height="7" fill="none" stroke="#c7d0d9" stroke-width="1.3" stroke-linecap="round" stroke-linejoin="round"><path d="M2.15 2.15 L4.90 4.65 L7.65 2.15"/></svg>
<div class="abs" id="adv" style="left:82px;top:642px;font-size:30px;-webkit-text-stroke:0.4px;line-height:34px;color:#5a82c8;white-space:nowrap;transform:scaleX(.94);transform-origin:0 50%">Advisor</div>
<div class="abs" style="left:82px;top:675px;width:1294px;height:3px;background:#5a82c8"></div>
<div class="panel" style="left:73px;top:712px;width:652px;height:130px;"><div class="corner red"></div><div class="abs" style="left:6px;top:3px;font-size:11px;font-weight:bold;-webkit-text-stroke:0.5px;color:#fff;line-height:12px">!</div><div class="abs" style="left:0;top:29px;font-size:14px;-webkit-text-stroke:0.3px;line-height:18px;color:#c7d0d9">No data</div></div>
<div class="panel" style="left:733px;top:712px;width:652px;height:68px;"><div class="abs" id="bal" style="left:8px;top:6px;font-size:22px;-webkit-text-stroke:0.3px;line-height:26px;color:#d8d9da;transform:scaleX(.945);transform-origin:0 50%">Balance</div><div class="abs" id="bald" style="left:8px;top:40px;font-size:14px;-webkit-text-stroke:0.25px;line-height:18px;color:#d8d9da;white-space:nowrap">An Imbalance between shards or nodes may indicates a potential problem</div></div>
<div class="panel" style="left:733px;top:788px;width:102px;height:60px;"><div class="corner"></div><svg class="abs" style="left:3px;top:3px" width="13" height="12" viewBox="0 0 13 12" fill="none" stroke="#82868e" stroke-width="1.05"><path d="M5 2.300 H1.500 V9.500 H8.700 V7.400 M5.400 6.700 L10.300 2.500"/><path d="M8 1.300 L11.800 1.100 L11.600 4.900 Z" fill="#82868e" stroke="none"/></svg><div class="ptitle"><span style="display:inline-block;transform:translateX(-1.8px) scaleX(1)">Connec<span style="display:inline-block;transform:scaleX(.62);transform-origin:0 50%;margin-right:-5.3px">…</span></span></div></div>
<div class="panel" style="left:843px;top:788px;width:102px;height:60px;"><div class="corner"></div><svg class="abs" style="left:3px;top:3px" width="13" height="12" viewBox="0 0 13 12" fill="none" stroke="#82868e" stroke-width="1.05"><path d="M5 2.300 H1.500 V9.500 H8.700 V7.400 M5.400 6.700 L10.300 2.500"/><path d="M8 1.300 L11.800 1.100 L11.600 4.900 Z" fill="#82868e" stroke="none"/></svg><div class="ptitle"><span style="display:inline-block;transform:translateX(0px) scaleX(0.915)">CQL OPs</span></div></div>
<div class="panel" style="left:953px;top:788px;width:102px;height:60px;"><div class="corner"></div><svg class="abs" style="left:3px;top:3px" width="13" height="12" viewBox="0 0 13 12" fill="none" stroke="#82868e" stroke-width="1.05"><path d="M5 2.300 H1.500 V9.500 H8.700 V7.400 M5.400 6.700 L10.300 2.500"/><path d="M8 1.300 L11.800 1.100 L11.600 4.900 Z" fill="#82868e" stroke="none"/></svg><div class="ptitle">Node La<span style="display:inline-block;transform:scaleX(.62);transform-origin:0 50%;margin-right:-5.3px">…</span></div></div>
<div class="panel" style="left:1063px;top:788px;width:102px;height:60px;"><div class="corner"></div><svg class="abs" style="left:3px;top:3px" width="13" height="12" viewBox="0 0 13 12" fill="none" stroke="#82868e" stroke-width="1.05"><path d="M5 2.300 H1.500 V9.500 H8.700 V7.400 M5.400 6.700 L10.300 2.500"/><path d="M8 1.300 L11.800 1.100 L11.600 4.900 Z" fill="#82868e" stroke="none"/></svg><div class="ptitle"><span style="display:inline-block;transform:translateX(-2px) scaleX(1)">Shard L<span style="display:inline-block;transform:scaleX(.62);transform-origin:0 50%;margin-right:-5.3px">…</span></span></div></div>
<div class="panel" style="left:1173px;top:788px;width:102px;height:60px;"><div class="corner"></div><svg class="abs" style="left:5px;top:4px" width="6" height="10" viewBox="0 0 6 10" fill="#8e9196"><rect x="1.6" y="0.8" width="2.2" height="1.8"/><rect x="0.8" y="3.7" width="3" height="1.2"/><rect x="1.6" y="3.700" width="2.2" height="4.6"/><rect x="0.5" y="7.800" width="4.4" height="1.3"/></svg><div class="ptitle"><span style="display:inline-block;transform:translateX(-0.5px) scaleX(0.975)">Cache</span></div></div>
<div class="panel" style="left:1283px;top:788px;width:102px;height:60px;"><div class="corner"></div><svg class="abs" style="left:5px;top:4px" width="6" height="10" viewBox="0 0 6 10" fill="#8e9196"><rect x="1.6" y="0.8" width="2.2" height="1.8"/><rect x="0.8" y="3.7" width="3" height="1.2"/><rect x="1.6" y="3.700" width="2.2" height="4.6"/><rect x="0.5" y="7.800" width="4.4" height="1.3"/></svg><div class="ptitle">SSTable</div></div>
</div></body></html>
